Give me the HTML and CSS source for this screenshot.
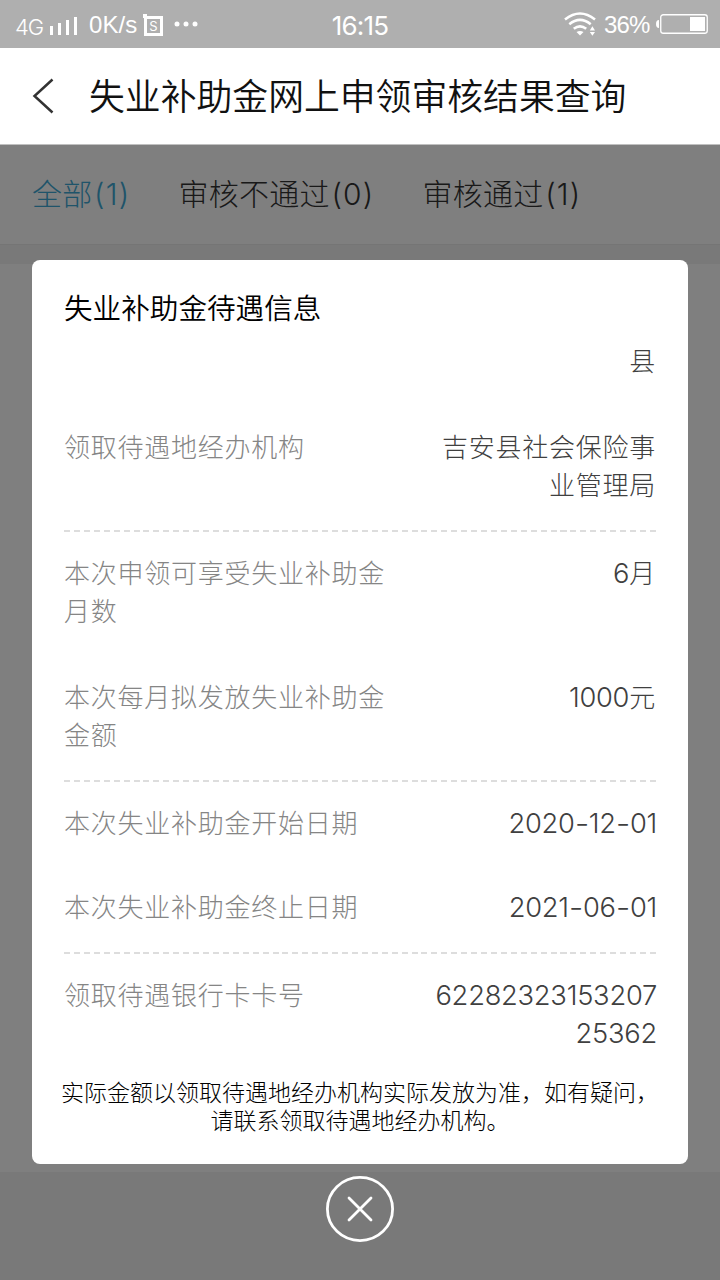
FILE: index.html
```html
<!DOCTYPE html>
<html lang="zh-CN">
<head>
<meta charset="utf-8">
<title>失业补助金网上申领审核结果查询</title>
<link rel="stylesheet" href="styles.css">
</head>
<body>
<div class="screen">
  <div class="status">
    <span class="network">4G</span>
    <svg class="signal" width="28" height="20" viewBox="0 0 28 20" fill="#fff"><path d="M0 10h3v9H0zM8 7h3v12H8zM16 4h3v15h-3zM24 1h3v18h-3z"/></svg>
    <span class="speed">0K/s</span>
    <svg class="sim-frame" width="20" height="22" viewBox="0 0 20 22"><path d="M0 0h4v2h16v20H1V4H0z M4 5v14h13V5z" fill="#fff" fill-rule="evenodd"/><text class="sim-letter" x="10.5" y="17" text-anchor="middle">S</text></svg>
    <svg class="dots" width="24" height="6" viewBox="0 0 24 6" fill="#fff"><circle cx="3" cy="3" r="2.5"/><circle cx="12" cy="3" r="2.5"/><circle cx="21" cy="3" r="2.5"/></svg>
    <span class="clock">16:15</span>
    <svg class="wifi" width="32" height="24" viewBox="0 0 32 24" fill="none" stroke="#fff" stroke-width="2.6"><path d="M1 7.5Q16-4.5 31 7.5M5.3 12.2Q16 3.7 26.7 12.2M9.8 16.8Q16 11.8 22.2 16.8"/><path d="M12.5 20Q16 17.8 19.5 20L16 23.5z" fill="#fff" stroke="none"/><path d="M25.8 18.5h5.2l-2.6-4.3zM25.8 20h5.2l-2.6 3.8z" fill="#fff" stroke="none"/></svg>
    <span class="percent">36%</span>
    <svg class="battery" width="53" height="20" viewBox="0 0 53 20"><path d="M3 6Q0 6 0 10t3 4z" fill="#fff"/><rect x="4.75" y=".75" width="46.5" height="18.5" rx="2.5" fill="none" stroke="#fff" stroke-width="1.3"/><path d="M34 3h15v14H34z" fill="#fff"/></svg>
  </div>
  <div class="header">
    <svg class="back" width="22" height="36" viewBox="0 0 22 36" fill="none" stroke="#333" stroke-width="2.5"><path d="M20.5 1.5 2.5 18l18 16.5"/></svg>
    <h1 class="heading">失业补助金网上申领审核结果查询</h1>
  </div>
  <div class="content">
    <div class="tabs">
      <span class="tab active">全部<span class="count">(1)</span></span>
      <span class="tab">审核不通过<span class="count">(0)</span></span>
      <span class="tab">审核通过<span class="count">(1)</span></span>
    </div>
    <div class="band"></div>
    <div class="list"></div>
    <div class="footer"></div>
    <div class="overlay">
      <div class="modal">
        <h2 class="title">失业补助金待遇信息</h2>
        <div class="group">
          <div class="row"><span class="label"></span><span class="value">县</span></div>
          <div class="row"><span class="label">领取待遇地经办机构</span><span class="value">吉安县社会保险事<br>业管理局</span></div>
        </div>
        <div class="group">
          <div class="row"><span class="label">本次申领可享受失业补助金<br>月数</span><span class="value"><span class="number">6</span>月</span></div>
          <div class="row"><span class="label">本次每月拟发放失业补助金<br>金额</span><span class="value"><span class="number">1000</span>元</span></div>
        </div>
        <div class="group dates">
          <div class="row"><span class="label">本次失业补助金开始日期</span><span class="value number digits">2020<span class="dash">-</span>12<span class="dash">-</span>01</span></div>
          <div class="row"><span class="label">本次失业补助金终止日期</span><span class="value number digits">2021<span class="dash">-</span>06<span class="dash">-</span>01</span></div>
        </div>
        <div class="group">
          <div class="row"><span class="label">领取待遇银行卡卡号</span><span class="value number digits">62282323153207<br>25362</span></div>
        </div>
        <p class="note">实际金额以领取待遇地经办机构实际发放为准，如有疑问，<br>请联系领取待遇地经办机构。</p>
      </div>
      <svg class="close" width="70" height="68" viewBox="0 0 70 68" fill="none" stroke="#fff" stroke-width="2.8" stroke-linecap="round"><ellipse cx="35" cy="34" rx="32.6" ry="31.6"/><path d="m24 23 22 22M46 23 24 45"/></svg>
    </div>
  </div>
</div>
</body>
</html>
```
FILE: styles.css
```css
body {
  margin: 0;
  font-family: Inter, "Noto Sans CJK SC", sans-serif;
  font-weight: 300;
}
.screen {
  width: 720px;
  height: 1280px;
  overflow: hidden;
  display: flex;
  flex-direction: column;
}
.status {
  position: relative;
  box-sizing: border-box;
  height: 48px;
  padding: 0 11px 0 15px;
  display: flex;
  align-items: center;
  background: #afafaf;
  color: #fff;
  font: 400 24px/48px "Liberation Sans", sans-serif;
}
.network {
  width: 35px;
  font: 300 22px/48px Inter, sans-serif;
  letter-spacing: -1px;
  padding-top: 6px;
}
.signal { margin-top: 4px; }
.speed {
  margin: 2px 0 0 11px;
  width: 54px;
  white-space: nowrap;
  letter-spacing: .1px;
}
.sim-frame { margin-top: 1px; }
.sim-letter { font: 400 13px Inter, sans-serif; fill: #fff; }
.dots { margin-left: 11px; }
.clock {
  position: absolute;
  left: 0;
  right: 0;
  top: 2px;
  text-align: center;
  font: 400 26px/48px Inter, sans-serif;
  letter-spacing: -.8px;
}
.wifi { margin-left: auto; }
.percent {
  margin: 2px 6px 0 8px;
  width: 46px;
  white-space: nowrap;
  letter-spacing: -.8px;
}
.header {
  box-sizing: border-box;
  height: 97px;
  padding-left: 32px;
  display: flex;
  align-items: center;
  gap: 35px;
  background: #fff;
  border-bottom: 1px solid #c0c0c0;
}
.heading {
  margin: 2px 0 0;
  font-size: 35.85px;
  line-height: 48px;
  font-weight: 350;
  color: #111;
}
.content {
  position: relative;
  flex: 1;
  display: flex;
  flex-direction: column;
}
.tabs {
  height: 99px;
  padding-left: 32px;
  display: flex;
  gap: 48px;
  font: 300 30px/98px Inter, "Noto Sans CJK SC", sans-serif;
  letter-spacing: .3px;
  color: #333;
}
.count { margin-left: 1.5px; letter-spacing: 1.2px; }
.active { color: #3fa8d4; }
.band { height: 20px; background: #f2f2f2; box-shadow: inset 0 1px #ebebeb; }
.list { flex: 1; background: #fff; }
.footer { height: 108px; background: #f2f2f2; }
.overlay {
  position: absolute;
  inset: 0;
  padding-top: 115px;
  display: flex;
  flex-direction: column;
  align-items: center;
  background: rgba(0, 0, 0, .5);
}
.modal {
  box-sizing: border-box;
  width: 656px;
  height: 904px;
  padding: 29px 32px 0;
  border-radius: 8px;
  background: #fff;
}
.title {
  margin: 0 0 14px;
  font-size: 28.6px;
  line-height: 40px;
  font-weight: 350;
  color: #000;
}
.group {
  display: flex;
  flex-direction: column;
  gap: 48px;
  padding-bottom: 25px;
  font-size: 26px;
  line-height: 38px;
  letter-spacing: .75px;
}
.group + .group {
  padding-top: 25px;
  background: repeating-linear-gradient(90deg, #ddd 0 6px, transparent 6px 9.93px) 0 0 / 100% 2px no-repeat;
}
.dates { gap: 46px; }
.row { display: flex; justify-content: space-between; }
.label { color: #858585; }
.value { color: #404040; text-align: right; }
.number { font-size: 27.3px; letter-spacing: -.25px; }
.digits { margin-right: -1px; }
.dash { display: inline-block; transform: scaleX(1.15); margin: 0 1px; }
.note {
  margin: 1px -10px 0;
  font-size: 23px;
  line-height: 28px;
  text-align: center;
  white-space: nowrap;
  color: #000;
}
.close { margin-top: 11px; }
```
